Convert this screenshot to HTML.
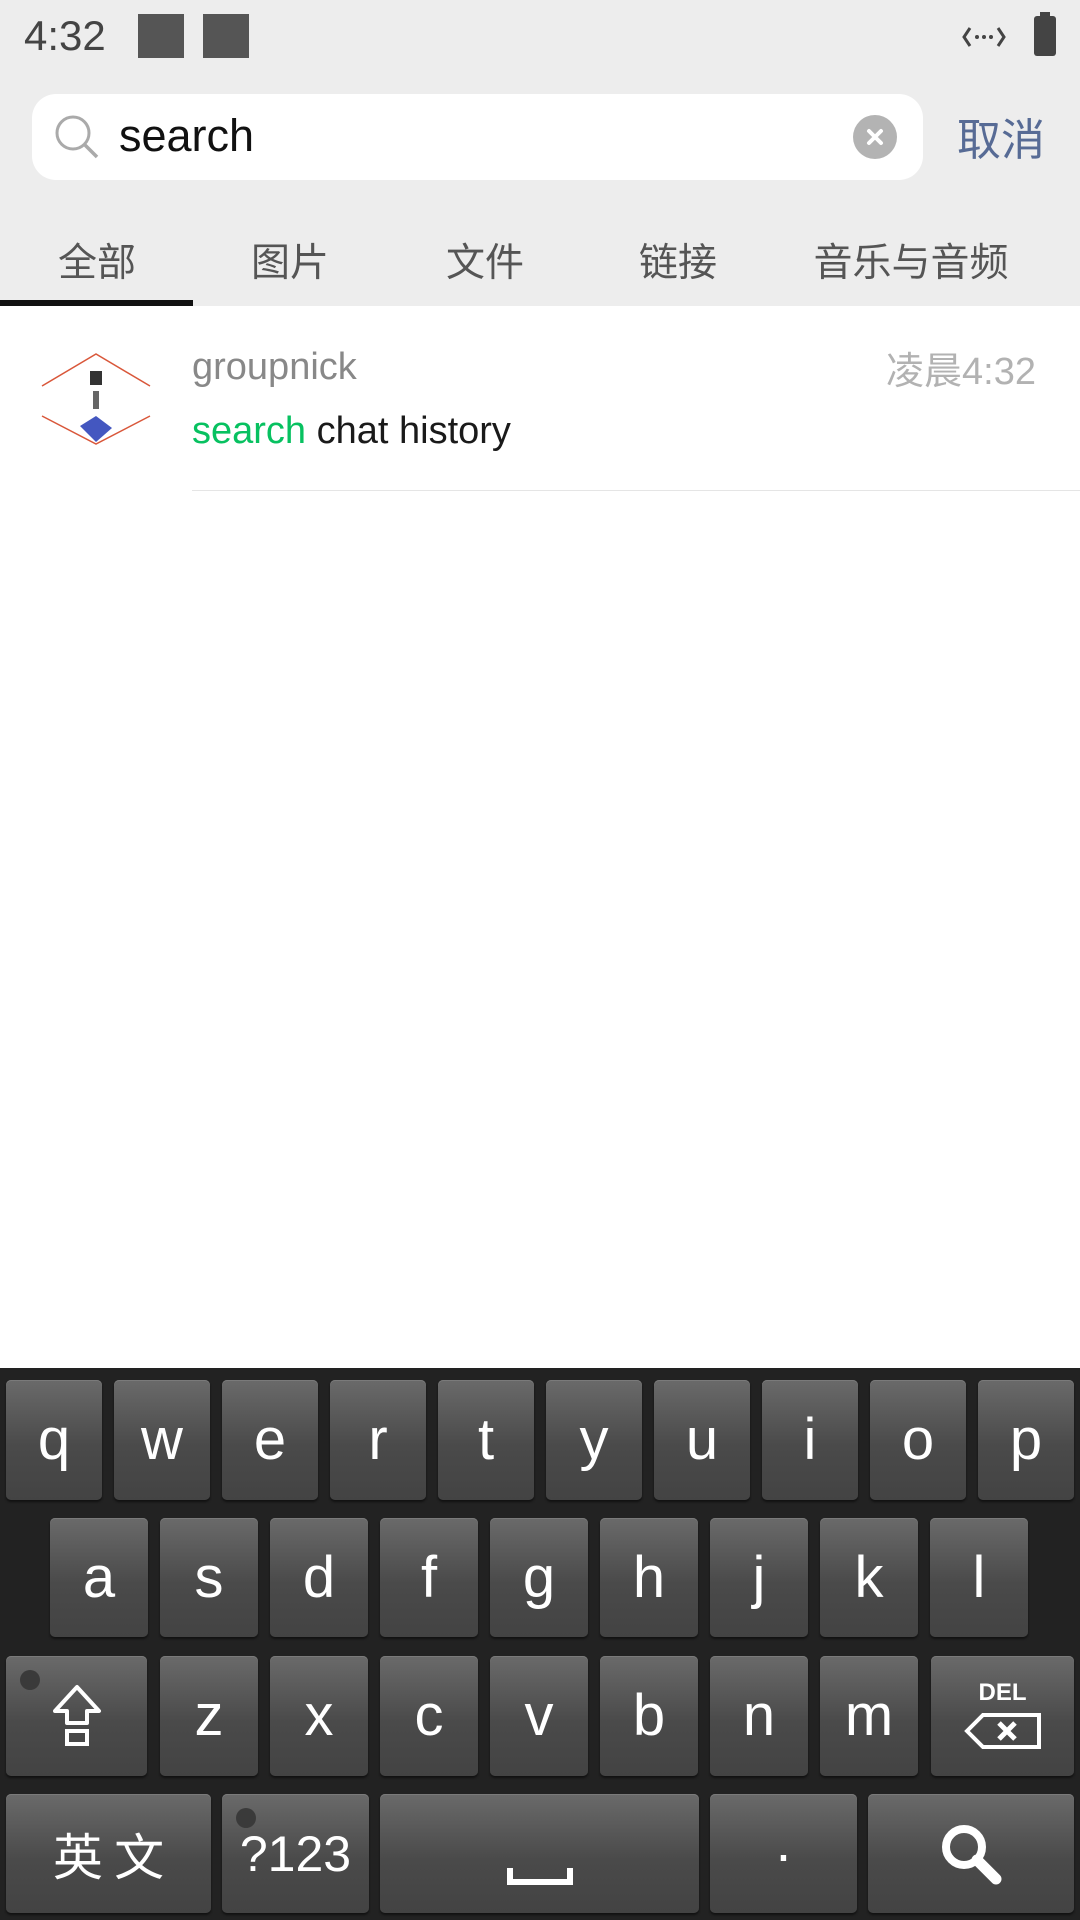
<!DOCTYPE html>
<html><head><meta charset="utf-8"><style>
*{margin:0;padding:0;box-sizing:border-box}
body{width:1080px;height:1920px;position:relative;background:#fff;font-family:"Liberation Sans","Noto Sans CJK SC",sans-serif;overflow:hidden}
.a{position:absolute}
.k{position:absolute;border-radius:5px;background:linear-gradient(#6a6a6a,#4a4a4a 55%,#434343);box-shadow:inset 0 1px 0 #7a7a7a,0 2px 2px #111;color:#fff;font-size:58px;display:flex;align-items:center;justify-content:center;line-height:1}
.dot{position:absolute;left:14px;top:14px;width:20px;height:20px;border-radius:50%;background:#3a3a3a}
.tab{position:absolute;top:232px;font-size:39px;color:#555;transform:translateX(-50%);white-space:nowrap}
</style></head><body>
<div class="a" style="left:0;top:0;width:1080px;height:306px;background:#ededed"></div>
<div class="a" style="left:24px;top:12px;font-size:42px;color:#444">4:32</div>
<div class="a" style="left:138px;top:14px;width:46px;height:44px;background:#555"></div>
<div class="a" style="left:203px;top:14px;width:46px;height:44px;background:#555"></div>
<svg class="a" style="left:962px;top:22px" width="44" height="30" viewBox="0 0 44 30"><path d="M8 6L2 15L8 24M36 6L42 15L36 24" fill="none" stroke="#444" stroke-width="3"/><circle cx="15" cy="15" r="2" fill="#444"/><circle cx="22" cy="15" r="2" fill="#444"/><circle cx="29" cy="15" r="2" fill="#444"/></svg>
<div class="a" style="left:1034px;top:16px;width:22px;height:40px;background:#444;border-radius:3px"></div>
<div class="a" style="left:1040px;top:12px;width:10px;height:6px;background:#444"></div>
<div class="a" style="left:32px;top:94px;width:891px;height:86px;background:#fff;border-radius:24px"></div>
<svg class="a" style="left:52px;top:112px" width="50" height="50" viewBox="0 0 50 50"><circle cx="21" cy="21" r="16" fill="none" stroke="#aaa" stroke-width="3"/><line x1="33" y1="33" x2="45" y2="45" stroke="#aaa" stroke-width="3.5"/></svg>
<div class="a" style="left:119px;top:110px;font-size:45px;color:#111">search</div>
<div class="a" style="left:853px;top:115px;width:44px;height:44px;border-radius:50%;background:#b3b3b3"></div>
<svg class="a" style="left:853px;top:115px" width="44" height="44"><path d="M16 16L28 28M28 16L16 28" stroke="#fff" stroke-width="4" stroke-linecap="round"/></svg>
<div class="a" style="left:957px;top:104px;font-size:44px;color:#576b95">取消</div>
<div class="tab" style="left:97px">全部</div>
<div class="tab" style="left:290px">图片</div>
<div class="tab" style="left:485px">文件</div>
<div class="tab" style="left:678px">链接</div>
<div class="tab" style="left:911px">音乐与音频</div>
<div class="a" style="left:0;top:300px;width:193px;height:6px;background:#111"></div>
<svg class="a" style="left:40px;top:346px" width="112" height="103" viewBox="0 0 112 103"><path d="M2 40L56 8L110 40M2 70L56 98L110 70" fill="none" stroke="#d9573a" stroke-width="1.5"/><rect x="50" y="25" width="12" height="14" fill="#333"/><rect x="53" y="45" width="6" height="18" fill="#666"/><path d="M40 80L56 70L72 82L56 96Z" fill="#4457c0"/></svg>
<div class="a" style="left:192px;top:346px;font-size:38px;color:#888">groupnick</div>
<div class="a" style="right:44px;top:340px;font-size:38px;color:#b2b2b2">凌晨4:32</div>
<div class="a" style="left:192px;top:410px;font-size:38px;color:#1a1a1a"><span style="color:#07c160">search</span> chat history</div>
<div class="a" style="left:192px;top:490px;width:888px;height:1px;background:#e5e5e5"></div>
<div class="a" style="left:0;top:1368px;width:1080px;height:552px;background:#222"></div>
<div class="k" style="left:6px;top:1380px;width:96px;height:120px">q</div>
<div class="k" style="left:114px;top:1380px;width:96px;height:120px">w</div>
<div class="k" style="left:222px;top:1380px;width:96px;height:120px">e</div>
<div class="k" style="left:330px;top:1380px;width:96px;height:120px">r</div>
<div class="k" style="left:438px;top:1380px;width:96px;height:120px">t</div>
<div class="k" style="left:546px;top:1380px;width:96px;height:120px">y</div>
<div class="k" style="left:654px;top:1380px;width:96px;height:120px">u</div>
<div class="k" style="left:762px;top:1380px;width:96px;height:120px">i</div>
<div class="k" style="left:870px;top:1380px;width:96px;height:120px">o</div>
<div class="k" style="left:978px;top:1380px;width:96px;height:120px">p</div>
<div class="k" style="left:50px;top:1518px;width:98px;height:119px">a</div>
<div class="k" style="left:160px;top:1518px;width:98px;height:119px">s</div>
<div class="k" style="left:270px;top:1518px;width:98px;height:119px">d</div>
<div class="k" style="left:380px;top:1518px;width:98px;height:119px">f</div>
<div class="k" style="left:490px;top:1518px;width:98px;height:119px">g</div>
<div class="k" style="left:600px;top:1518px;width:98px;height:119px">h</div>
<div class="k" style="left:710px;top:1518px;width:98px;height:119px">j</div>
<div class="k" style="left:820px;top:1518px;width:98px;height:119px">k</div>
<div class="k" style="left:930px;top:1518px;width:98px;height:119px">l</div>
<div class="k" style="left:6px;top:1656px;width:141px;height:120px"><div class="dot"></div><svg width="60" height="66" viewBox="0 0 60 66"><path d="M30 4L52 28H40V40H20V28H8Z" fill="none" stroke="#fff" stroke-width="4" stroke-linejoin="round"/><rect x="20" y="48" width="20" height="13" fill="none" stroke="#fff" stroke-width="4"/></svg></div>
<div class="k" style="left:160px;top:1656px;width:98px;height:120px">z</div>
<div class="k" style="left:270px;top:1656px;width:98px;height:120px">x</div>
<div class="k" style="left:380px;top:1656px;width:98px;height:120px">c</div>
<div class="k" style="left:490px;top:1656px;width:98px;height:120px">v</div>
<div class="k" style="left:600px;top:1656px;width:98px;height:120px">b</div>
<div class="k" style="left:710px;top:1656px;width:98px;height:120px">n</div>
<div class="k" style="left:820px;top:1656px;width:98px;height:120px">m</div>
<div class="k" style="left:931px;top:1656px;width:143px;height:120px;flex-direction:column"><div style="font-size:24px;font-weight:bold;margin-bottom:6px">DEL</div><svg width="80" height="40" viewBox="0 0 80 40"><path d="M4 20L20 4H76V36H20Z" fill="none" stroke="#fff" stroke-width="4"/><path d="M36 12L52 28M52 12L36 28" stroke="#fff" stroke-width="5"/></svg></div>
<div class="k" style="left:6px;top:1794px;width:205px;height:119px;font-size:50px;font-family:'Noto Sans CJK SC',sans-serif">英 文</div>
<div class="k" style="left:222px;top:1794px;width:147px;height:119px;font-size:50px"><div class="dot"></div>?123</div>
<div class="k" style="left:380px;top:1794px;width:319px;height:119px"><svg width="80" height="80" viewBox="0 0 80 80"><path d="M10 54V68H70V54" fill="none" stroke="#fff" stroke-width="6"/></svg></div>
<div class="k" style="left:710px;top:1794px;width:147px;height:119px;font-size:56px">·</div>
<div class="k" style="left:868px;top:1794px;width:206px;height:119px"><svg width="70" height="70" viewBox="0 0 70 70"><circle cx="28" cy="28" r="18" fill="none" stroke="#fff" stroke-width="8"/><line x1="41" y1="41" x2="60" y2="60" stroke="#fff" stroke-width="11" stroke-linecap="round"/></svg></div>
</body></html>
